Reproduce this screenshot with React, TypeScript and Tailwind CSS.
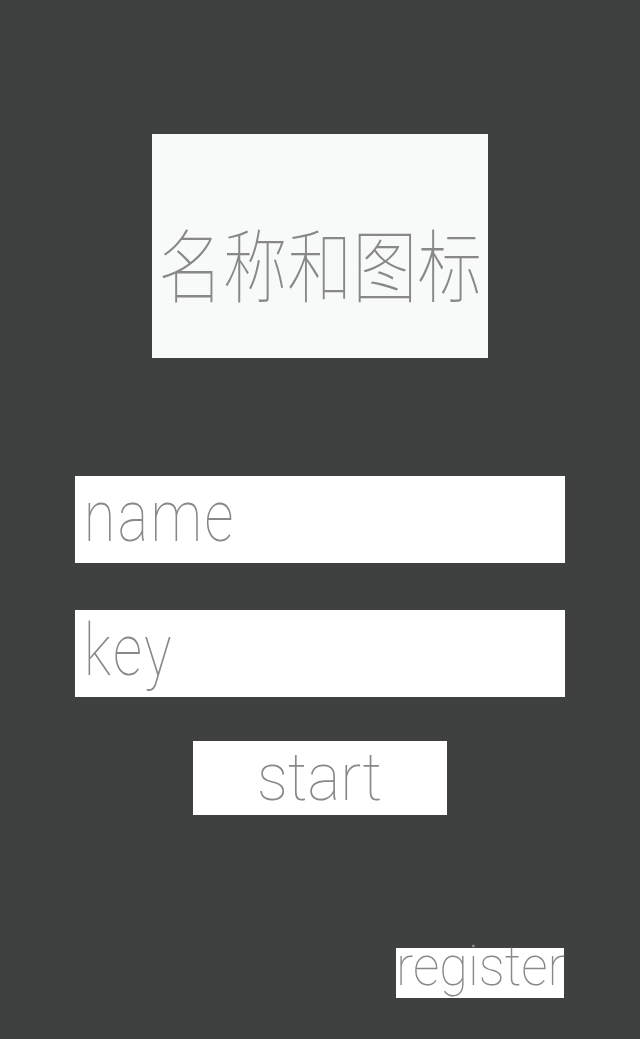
import React, { useState } from "react";

export default function App() {
  const [name, setName] = useState("");
  const [key, setKey] = useState("");

  return (
    <div
      className="min-h-[1039px] w-full bg-[#3f4140] flex flex-col items-center"
      style={{ fontFamily: 'Roboto, "Noto Sans CJK SC", sans-serif' }}
    >
      {/* logo placeholder */}
      <div className="mt-[134px] w-[336px] h-[224px] bg-[#f8faf9] flex justify-center pt-[87px] overflow-hidden">
        <span
          className="block text-[80px] leading-none font-thin text-[#888888] whitespace-nowrap scale-x-[0.81]"
          style={{ fontFamily: '"Noto Sans CJK SC", sans-serif' }}
        >
          名称和图标
        </span>
      </div>

      <div className="mt-[118px] w-[490px] flex flex-col gap-[47px]">
        <div className="h-[87px] w-full bg-white overflow-hidden">
          <input
            value={name}
            onChange={(e) => setName(e.target.value)}
            placeholder="name"
            className="h-[87px] w-[613px] origin-left scale-x-[0.8] bg-transparent pl-[11px] pb-[6px] text-[72px] tracking-[3px] font-thin text-[#888888] placeholder:text-[#888888] outline-none"
          />
        </div>
        <div className="h-[87px] w-full bg-white overflow-hidden">
          <input
            value={key}
            onChange={(e) => setKey(e.target.value)}
            placeholder="key"
            className="h-[87px] w-[613px] origin-left scale-x-[0.8] bg-transparent pl-[11px] pb-[6px] text-[72px] tracking-[3px] font-thin text-[#888888] placeholder:text-[#888888] outline-none"
          />
        </div>
      </div>

      <button className="mt-[44px] w-[254px] h-[74px] bg-white flex items-center justify-center">
        <span className="block text-[66px] leading-none font-thin text-[#888888] scale-x-[0.94]">
          start
        </span>
      </button>

      <div className="mt-[133px] w-[490px] flex justify-end pr-[1px]">
        <button className="w-[168px] h-[50px] bg-white flex items-center pb-[14px]">
          <span className="block text-[55px] leading-none font-thin text-[#888888] whitespace-nowrap origin-left scale-x-[0.95]">
            register
          </span>
        </button>
      </div>
    </div>
  );
}
